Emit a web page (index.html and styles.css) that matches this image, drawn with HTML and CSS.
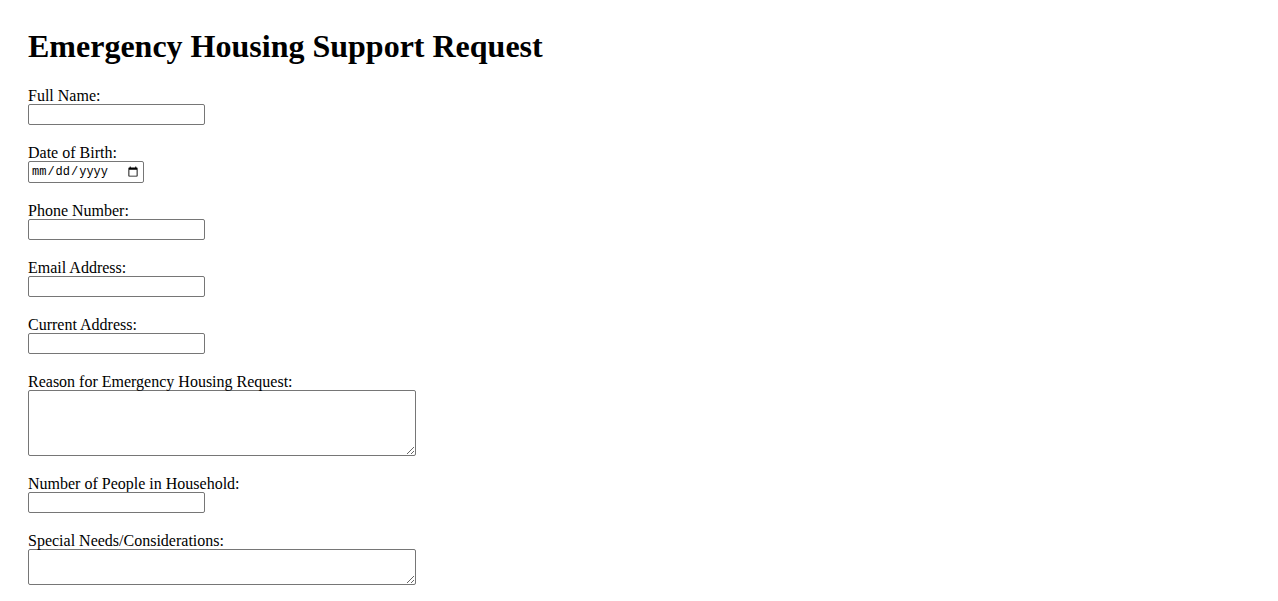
FILE: index.html
```html
<!DOCTYPE html>
<html>
  <head>
    <title>Emergency Housing Support Request</title>
    <link rel="stylesheet" href="styles.css">
  </head>
  <body>
    <h1>Emergency Housing Support Request</h1>
    <form id="housingForm">
      <div class="form-group">
        <label for="fullName">Full Name:</label>
        <input type="text" id="fullName" name="fullName" />
      </div>
      <div class="form-group">
        <label for="dob">Date of Birth:</label>
        <input type="date" id="dob" name="dob" />
      </div>
      <div class="form-group">
        <label for="phone">Phone Number:</label>
        <input type="tel" id="phone" name="phone" />
      </div>
      <div class="form-group">
        <label for="email">Email Address:</label>
        <input type="email" id="email" name="email" />
      </div>
      <div class="form-group">
        <label for="address">Current Address:</label>
        <input type="text" id="address" name="address" />
      </div>
      <div class="form-group">
        <label for="reason">Reason for Emergency Housing Request:</label>
        <textarea id="reason" name="reason" rows="4" cols="50"></textarea>
      </div>
      <div class="form-group">
        <label for="household">Number of People in Household:</label>
        <input type="number" id="household" name="household" min="1" />
      </div>
      <div class="form-group">
        <label for="needs">Special Needs/Considerations:</label>
        <textarea id="needs" name="needs" rows="2" cols="50"></textarea>
      </div>
    </form>
  </body>
</html>
```

FILE: styles.css
```css
body {
  margin: 8px;
  padding: 20px;
  font-family: "Liberation Serif", "Times New Roman", serif;
  font-size: 16px;
  color: #000;
}
h1 {
  margin: 0 0 22px;
  font-size: 32px;
  line-height: 37px;
}
.form-group {
  margin-bottom: 19px;
}
.form-group label {
  display: block;
  line-height: 17px;
}
.form-group input,
.form-group textarea {
  box-sizing: border-box;
  margin: 0;
  border: 1px solid #767676;
  border-radius: 2px;
  font-family: "Liberation Mono", monospace;
  font-size: 13px;
  vertical-align: top;
}
.form-group input {
  width: 177px;
  height: 21px;
  padding: 1px 2px;
}
.form-group input[type="date"] {
  width: 116px;
  height: 22px;
  font-size: 12px;
  color: #000;
}
.form-group textarea {
  display: block;
  width: 388px;
  padding: 2px;
  resize: vertical;
}
#reason {
  height: 66px;
}
#needs {
  height: 36px;
}
```
